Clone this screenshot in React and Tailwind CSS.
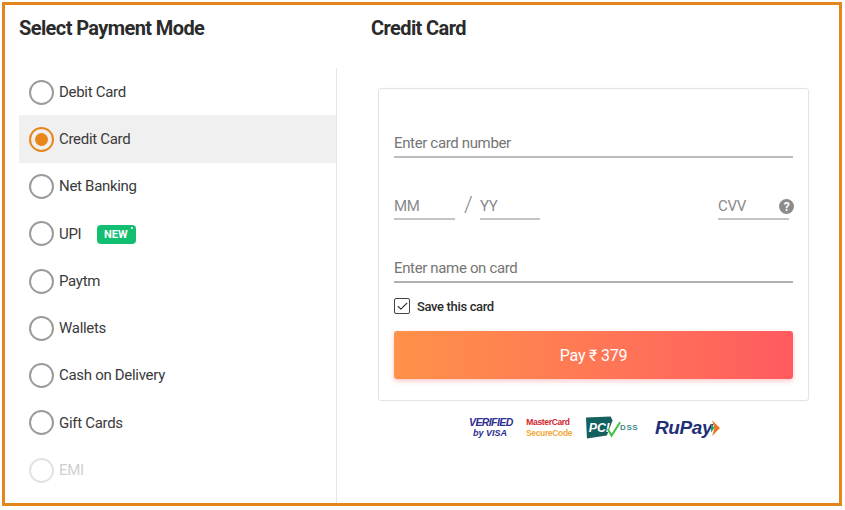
import { Check } from 'lucide-react'

const modes = ['Debit Card', 'Credit Card', 'Net Banking', 'UPI', 'Paytm', 'Wallets', 'Cash on Delivery', 'Gift Cards', 'EMI']

function ModeRow({ label }) {
  const selected = label === 'Credit Card'
  const disabled = label === 'EMI'
  return (
    <li className={`flex h-[47.25px] items-center pl-[10px] pt-[1px] ${selected ? 'bg-[#f0f0f0]' : ''}`}>
      <span
        className={`flex h-[25px] w-[25px] shrink-0 items-center justify-center rounded-full border-2 ${
          selected ? 'border-[#e8861a]' : disabled ? 'border-[#e2e2e2]' : 'border-[#9b9b9b]'
        }`}
      >
        {selected && <span className="h-[13px] w-[13px] rounded-full bg-[#e8861a]" />}
      </span>
      <span className={`ml-[5px] text-[15px] tracking-[-0.3px] ${disabled ? 'text-[#cfcfcf]' : 'text-[#3a3a3a]'}`}>{label}</span>
      {label === 'UPI' && (
        <span className="relative ml-[16px] mt-[1px] flex h-[19px] w-[39px] items-center justify-center rounded-[4px] bg-[#14be71] pr-[2px] pt-[2px] text-[11px] font-bold text-white">
          NEW
          <span className="absolute right-[3px] top-[2px] h-[2px] w-[2px] rounded-full bg-white" />
        </span>
      )}
    </li>
  )
}

function TrustLogos() {
  return (
    <div className="mt-[15px] flex items-center pl-[91px]">
      <div className="w-[42px] text-center font-['Liberation_Sans',sans-serif] font-bold italic leading-[11px] text-[#2b2f8f]">
        <div className="text-[10.5px] tracking-[-0.6px]">VERIFIED</div>
        <div className="text-[9px]">by VISA</div>
      </div>
      <div className="ml-[15px] w-[44px] text-center font-['Liberation_Sans',sans-serif] text-[8.5px] font-bold leading-[11px] tracking-[-0.35px]">
        <div className="text-[#d3242c]">MasterCard</div>
        <div className="text-[#f2a93b]">SecureCode</div>
      </div>
      <div className="ml-[16px] flex items-center">
        <svg width="36" height="23" viewBox="0 0 38 23">
          <path d="M0 1 L26 0 L28 4 L22 20 L1 23 Z" fill="#14605f" />
          <text x="3" y="16" fontFamily="Liberation Sans" fontWeight="700" fontStyle="italic" fontSize="13" fill="#fff">PCI</text>
          <path d="M23 13 L27 20 L36 6" fill="none" stroke="#3fbf3f" strokeWidth="2" />
        </svg>
        <div className="ml-[-2px] w-[20px] font-['Liberation_Sans',sans-serif] text-[8px] font-bold leading-[8px] tracking-[0.6px] text-[#3f8f8c]">DSS</div>
      </div>
      <div className="ml-[15px] flex items-center font-['Liberation_Sans',sans-serif] text-[19px] font-bold italic leading-none tracking-[-0.4px] text-[#1f2f78]">
        RuPay
        <svg width="9" height="16" viewBox="0 0 8 14" className="ml-[-1px]">
          <path d="M1 0 L8 7 L1 14 L3 7 Z" fill="#e8792a" />
          <path d="M0 3 L3 7 L0 11 Z" fill="#2f9e58" />
        </svg>
      </div>
    </div>
  )
}

export default function App() {
  return (
    <div className="ml-[2px] mt-[2px] flex h-[504px] w-[840px] flex-col border-[3px] border-[#e5851d] bg-white font-['Roboto',sans-serif]">
      <div className="flex h-[63px] shrink-0 pb-[6px] text-[20px] font-bold leading-[46px] tracking-[-0.6px] text-[#2b2b2b]">
        <h2 className="w-[366px] pl-[14px]">Select Payment Mode</h2>
        <h2>Credit Card</h2>
      </div>
      <div className="flex min-h-0 flex-1">
        <ul className="ml-[14px] h-full w-[318px] border-r border-[#e6e6e6]">
          {modes.map((mode) => (
            <ModeRow key={mode} label={mode} />
          ))}
        </ul>
        <div className="ml-[41px] w-[431px]">
          <div className="mt-[20px] h-[313px] rounded-[3px] border border-[#e4e4e4] px-[15px] pt-[41px] shadow-[0_0_2px_rgba(0,0,0,0.05)]">
            <div className="h-[28px] border-b-2 border-[#bdbdbd] text-[15px] leading-[26px] tracking-[-0.35px] text-[#757575]">Enter card number</div>
            <div className="mt-[36px] flex items-start text-[15px] tracking-[-0.3px] text-[#8a8a8a]">
              <div className="h-[26px] w-[61px] border-b-2 border-[#c4c4c4] leading-[24px]">MM</div>
              <div className="ml-[9px] w-[16px] text-[22px] font-light leading-[22px]">/</div>
              <div className="h-[26px] w-[60px] border-b-2 border-[#c4c4c4] leading-[24px]">YY</div>
              <div className="ml-[178px] flex h-[26px] w-[71px] justify-between border-b-2 border-[#c4c4c4] leading-[24px]">
                <span>CVV</span>
                <span className="mr-[-5px] mt-[5px] flex h-[15px] w-[15px] items-center justify-center rounded-full bg-[#8c8c8c] text-[12px] font-bold leading-none text-white">?</span>
              </div>
            </div>
            <div className="mt-[35px] h-[28px] border-b-2 border-[#b0b0b0] text-[15px] leading-[26px] tracking-[-0.35px] text-[#757575]">Enter name on card</div>
            <div className="mt-[15px] flex items-center text-[13px] font-medium leading-none tracking-[-0.35px] text-[#2b2b2b]">
              <span className="flex h-[16px] w-[16px] items-center justify-center rounded-[2px] border border-[#444]">
                <Check size={13} strokeWidth={2} color="#333" />
              </span>
              <span className="ml-[7px]">Save this card</span>
            </div>
            <button className="mt-[17px] h-[48px] w-full rounded-[3px] bg-gradient-to-r from-[#ff9148] to-[#ff5a5f] pt-[2px] text-[16px] tracking-[-0.2px] text-white shadow-[0_2px_5px_rgba(255,90,95,0.35)]">
              Pay ₹ 379
            </button>
          </div>
          <TrustLogos />
        </div>
      </div>
    </div>
  )
}
